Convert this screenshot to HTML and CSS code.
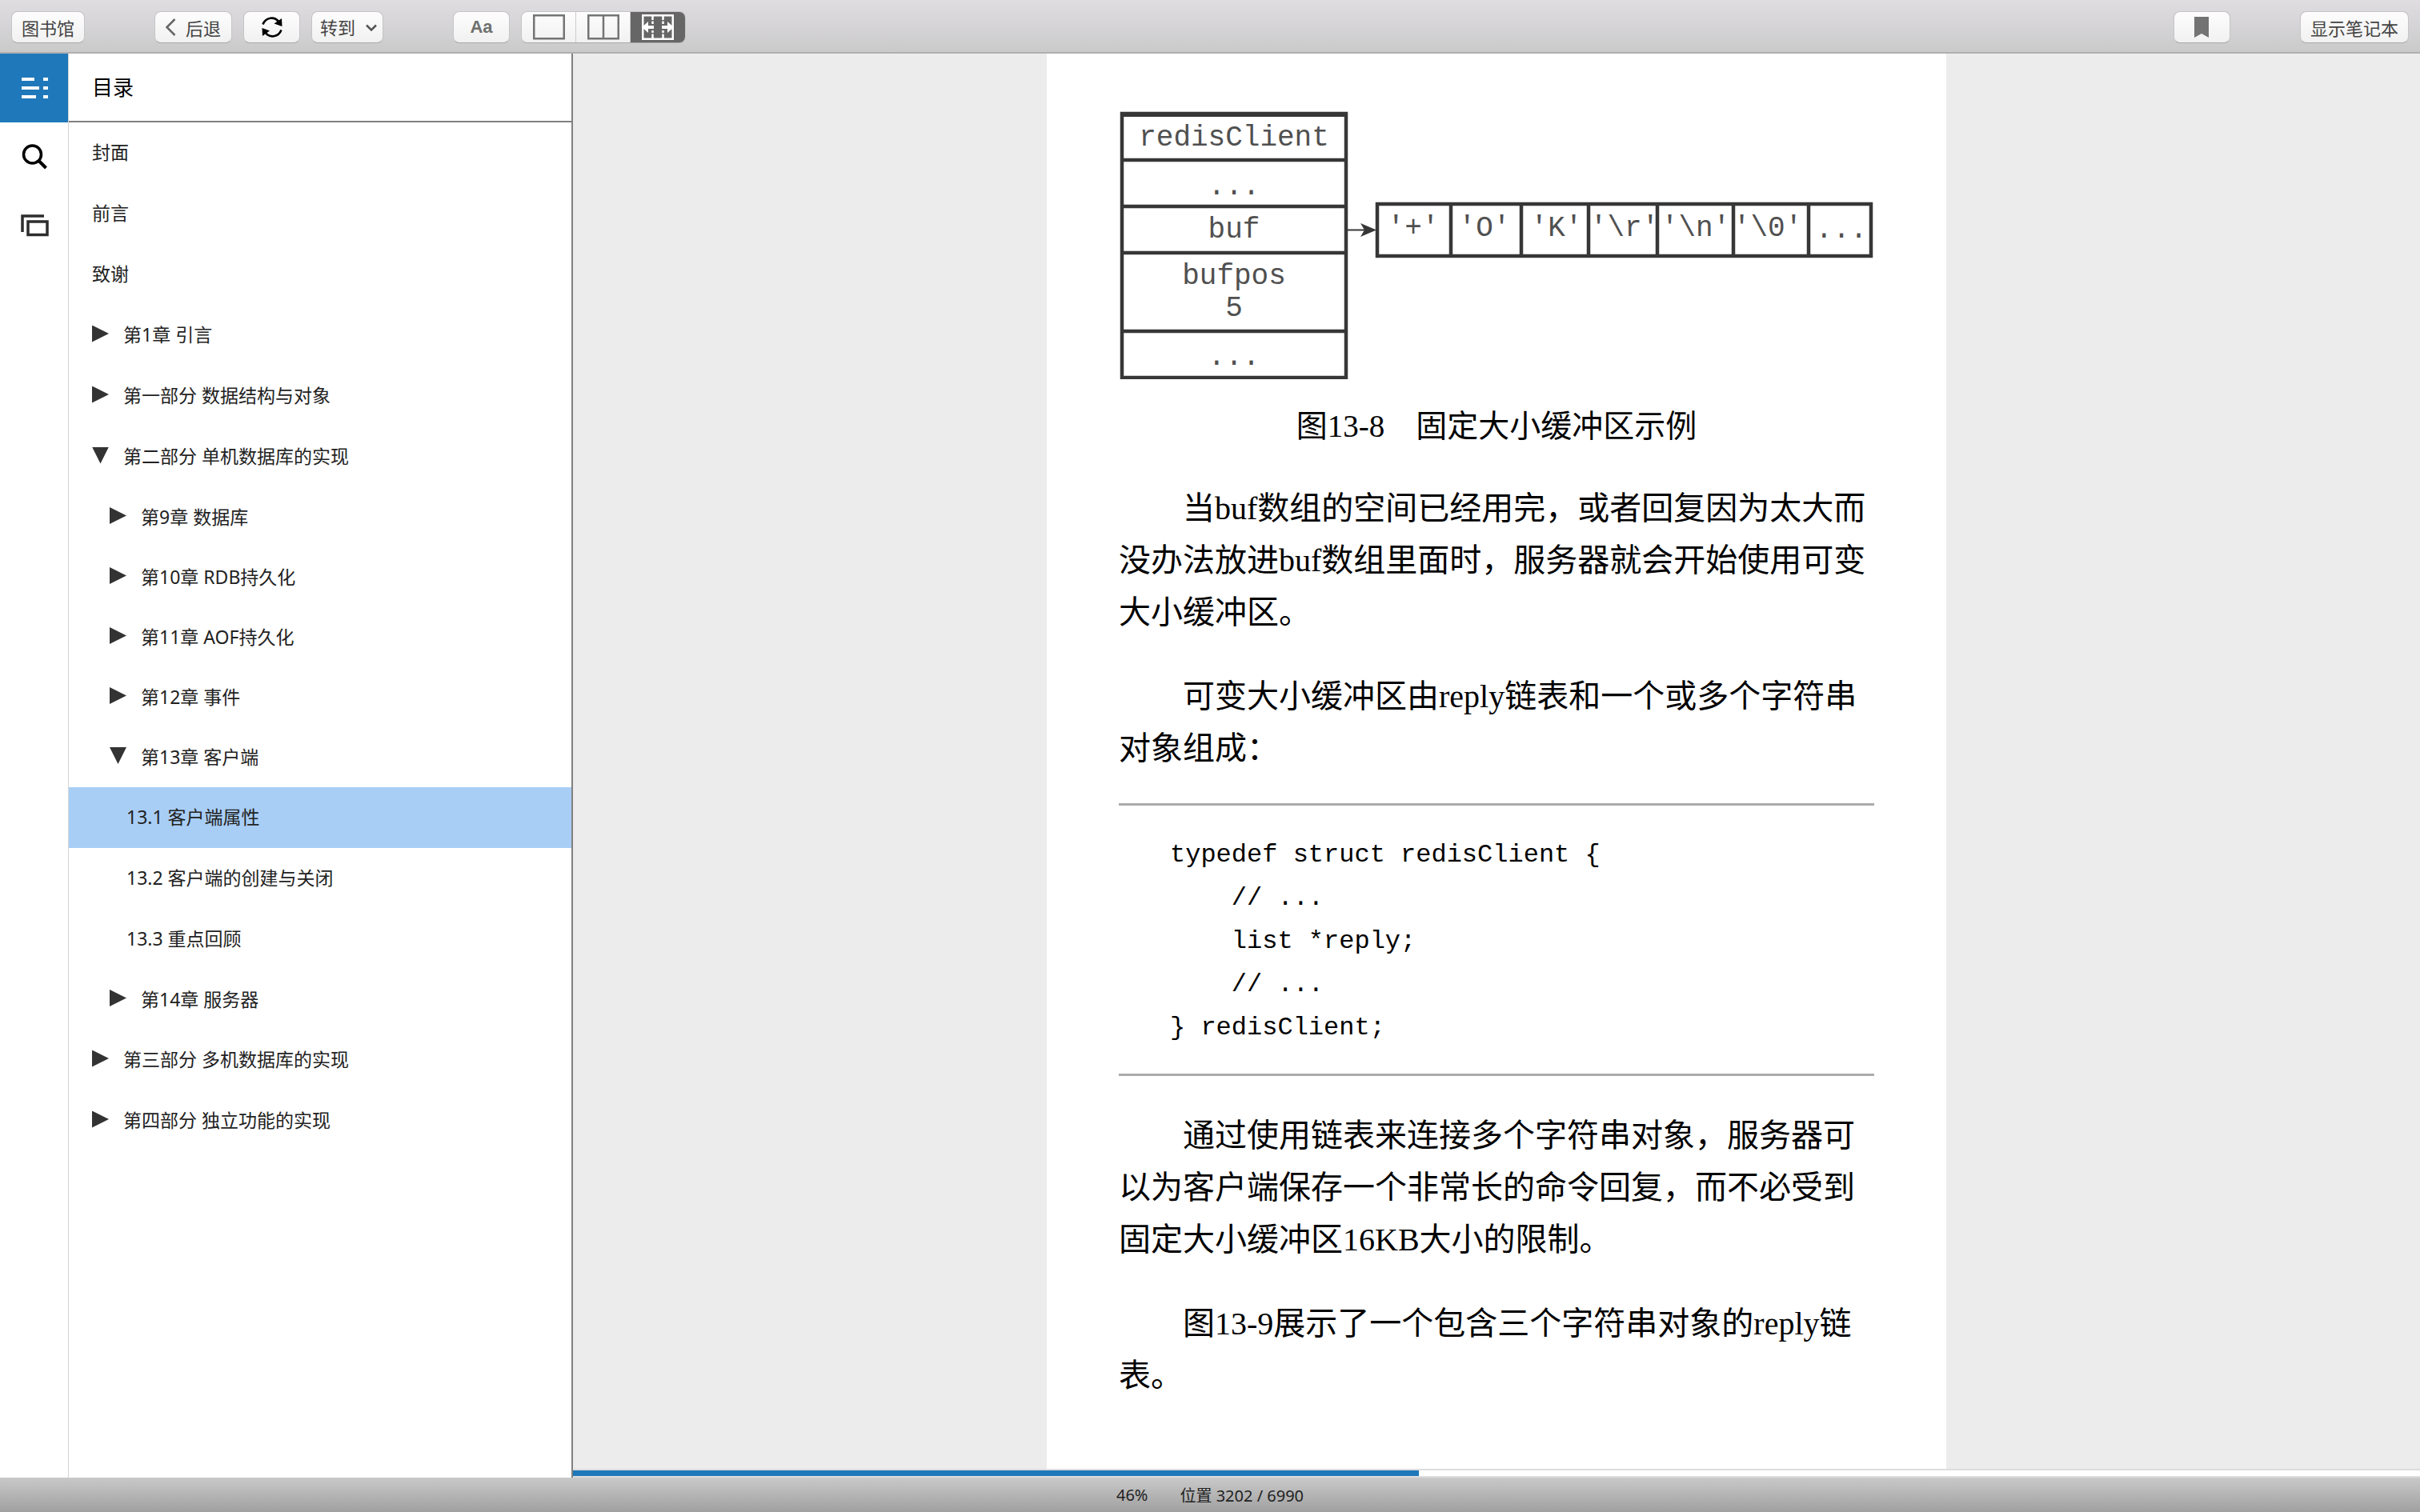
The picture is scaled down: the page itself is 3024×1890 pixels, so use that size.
FILE: index.html
```html
<!DOCTYPE html>
<html lang="zh-CN">
<head>
    <meta charset="UTF-8">
    <meta name="viewport" content="width=device-width, initial-scale=1.0">
    <title>第13章 客户端</title>
    <link rel="stylesheet" href="styles.css">
</head>
<body>
    <header class="toolbar">
        <div class="group">
            <button class="btn">图书馆</button>
        </div>
        <div class="group">
            <button class="btn btn-back">
                <svg width="13" height="22" viewBox="0 0 13 22"><path d="M11.5 1 L1.5 11 L11.5 21" fill="none" stroke="#666" stroke-width="2.5"/></svg>
                后退
            </button>
            <button class="btn btn-icon" aria-label="同步">
                <svg width="26" height="26" viewBox="0 0 26 26">
                    <path d="M1.5 9.5 C5 0.5 16 -1 21.5 6.5" fill="none" stroke="#000" stroke-width="2.6"/>
                    <path d="M25 2 L25.5 12 L15.5 8.5 Z"/>
                    <path d="M24.5 16.5 C21 25.5 10 27 4.5 19.5" fill="none" stroke="#000" stroke-width="2.6"/>
                    <path d="M0.5 14 L10 17.5 L1 24 Z"/>
                </svg>
            </button>
            <div class="goto">
                <select class="btn goto-select" aria-label="转到">
                    <option>转到</option>
                </select>
                <svg class="goto-arrow" width="14" height="9" viewBox="0 0 14 9"><path d="M1 1.5 L7 7.5 L13 1.5" fill="none" stroke="#555" stroke-width="2.5"/></svg>
            </div>
        </div>
        <div class="group">
            <button class="btn btn-icon btn-font">Aa</button>
            <div class="segments">
                <button class="segment" aria-label="单栏">
                    <svg width="40" height="32" viewBox="0 0 40 32"><rect x="1.25" y="1.25" width="37.5" height="29" fill="none" stroke="#737573" stroke-width="2.5"/></svg>
                </button>
                <button class="segment" aria-label="双栏">
                    <svg width="40" height="32" viewBox="0 0 40 32"><path d="M1.25 1.25 H38.75 V30.25 H1.25 Z M20 1 V30" fill="none" stroke="#737573" stroke-width="2.5"/></svg>
                </button>
                <button class="segment active" aria-label="适合宽度">
                    <svg width="40" height="32" viewBox="0 0 40 32">
                        <rect x="1.25" y="1.25" width="37.5" height="29.5" fill="none" stroke="#fff" stroke-width="2.5"/>
                        <path d="M13.5 2 V7 M13.5 8.5 V12 M13.5 20 V23 M13.5 24.5 V30 M26.5 2 V7 M26.5 8.5 V12 M26.5 20 V23 M26.5 24.5 V30" stroke="#fff" stroke-width="2.5"/>
                        <path d="M0 16 L8 9 V14 H15 V18 H8 V23 Z M40 16 L32 9 V14 H25 V18 H32 V23 Z" fill="#fff"/>
                    </svg>
                </button>
            </div>
        </div>
        <div class="group group-right">
            <button class="btn btn-icon" aria-label="书签">
                <svg width="18" height="26" viewBox="0 0 18 26"><path d="M0 0 H18 V26 L9 21 L0 26 Z" fill="#737373"/></svg>
            </button>
        </div>
        <div class="group">
            <button class="btn">显示笔记本</button>
        </div>
    </header>

    <div class="reader">
        <div class="rail">
            <button class="rail-btn active" aria-label="目录">
                <svg width="33" height="27" viewBox="0 0 33 27"><path d="M0 2 H16 M27 2 H33 M0 13 H22 M27 13 H33 M0 24 H18 M27 24 H33" stroke="#fff" stroke-width="4"/></svg>
            </button>
            <button class="rail-btn" aria-label="搜索">
                <svg width="33" height="32" viewBox="0 0 33 32"><circle cx="13.5" cy="13" r="11" fill="none" stroke="#000" stroke-width="3.5"/><path d="M21 20.5 L30.5 30" stroke="#000" stroke-width="4"/></svg>
            </button>
            <button class="rail-btn" aria-label="卡片">
                <svg width="35" height="28" viewBox="0 0 35 28"><path d="M29 2 H2 V22" fill="none" stroke="#2d2d2d" stroke-width="3.5"/><rect x="9" y="9" width="24" height="16.5" fill="none" stroke="#2d2d2d" stroke-width="3.5"/></svg>
            </button>
        </div>

        <nav class="toc">
            <h2 class="toc-title">目录</h2>
            <ul class="toc-list">
                <li><a href="#" class="item">封面</a></li>
                <li><a href="#" class="item">前言</a></li>
                <li><a href="#" class="item">致谢</a></li>
                <li><a href="#" class="item"><span class="arrow"></span>第1章 引言</a></li>
                <li><a href="#" class="item"><span class="arrow"></span>第一部分 数据结构与对象</a></li>
                <li><a href="#" class="item"><span class="arrow open"></span>第二部分 单机数据库的实现</a></li>
                <li><a href="#" class="item chapter"><span class="arrow"></span>第9章 数据库</a></li>
                <li><a href="#" class="item chapter"><span class="arrow"></span>第10章 RDB持久化</a></li>
                <li><a href="#" class="item chapter"><span class="arrow"></span>第11章 AOF持久化</a></li>
                <li><a href="#" class="item chapter"><span class="arrow"></span>第12章 事件</a></li>
                <li><a href="#" class="item chapter"><span class="arrow open"></span>第13章 客户端</a></li>
                <li><a href="#" class="item section current">13.1 客户端属性</a></li>
                <li><a href="#" class="item section">13.2 客户端的创建与关闭</a></li>
                <li><a href="#" class="item section">13.3 重点回顾</a></li>
                <li><a href="#" class="item chapter"><span class="arrow"></span>第14章 服务器</a></li>
                <li><a href="#" class="item"><span class="arrow"></span>第三部分 多机数据库的实现</a></li>
                <li><a href="#" class="item"><span class="arrow"></span>第四部分 独立功能的实现</a></li>
            </ul>
        </nav>

        <main class="content">
            <article class="page">
                <figure class="figure">
                    <svg class="diagram" viewBox="0 0 944 336">
                        <!-- redisClient struct -->
                        <g fill="none" stroke="#373737" stroke-width="4.5">
                            <rect x="4" y="4" width="280" height="330"/>
                            <path d="M4 62 H284 M4 120 H284 M4 178 H284 M4 276 H284"/>
                            <path d="M2 5 H286" stroke-width="6"/>
                        </g>
                        <g class="diagram-text">
                            <text x="144" y="44">redisClient</text>
                            <text x="144" y="105">...</text>
                            <text x="144" y="159">buf</text>
                            <text x="144" y="217">bufpos</text>
                            <text x="144" y="257">5</text>
                            <text x="144" y="318">...</text>
                        </g>
                        <!-- pointer -->
                        <path d="M286 149.5 H310" stroke="#373737" stroke-width="2"/>
                        <path d="M302 141 L322 149.5 L302 158 L307 149.5 Z" fill="#373737"/>
                        <!-- buf array -->
                        <g fill="none" stroke="#373737" stroke-width="4.5">
                            <rect x="323" y="117" width="617" height="65"/>
                            <path d="M415 117 V182 M503 117 V182 M587 117 V182 M673 117 V182 M768 117 V182 M862 117 V182"/>
                        </g>
                        <g class="diagram-text">
                            <text x="368" y="157">'+'</text>
                            <text x="457" y="157">'O'</text>
                            <text x="547" y="157">'K'</text>
                            <text x="632" y="157">'\r'</text>
                            <text x="721" y="157">'\n'</text>
                            <text x="811" y="157">'\0'</text>
                            <text x="903" y="159">...</text>
                        </g>
                    </svg>
                    <figcaption class="caption">图13-8　固定大小缓冲区示例</figcaption>
                </figure>

                <p>当buf数组的空间已经用完，或者回复因为太大而没办法放进buf数组里面时，服务器就会开始使用可变大小缓冲区。</p>
                <p>可变大小缓冲区由reply链表和一个或多个字符串对象组成：</p>

<pre class="code">typedef struct redisClient {
    // ...
    list *reply;
    // ...
} redisClient;</pre>

                <p>通过使用链表来连接多个字符串对象，服务器可以为客户端保存一个非常长的命令回复，而不必受到固定大小缓冲区16KB大小的限制。</p>
                <p>图13-9展示了一个包含三个字符串对象的reply链表。</p>
            </article>
            <div class="progress">
                <div class="progress-bar" style="width: 45.8%"></div>
            </div>
        </main>
    </div>

    <footer class="status">
        <span>46%</span>
        <span>位置 3202 / 6990</span>
    </footer>
</body>
</html>
```

FILE: styles.css
```css
* {
    box-sizing: border-box;
}

body {
    margin: 0;
    height: 100vh;
    display: flex;
    flex-direction: column;
    font-family: "Noto Sans", "Noto Sans CJK SC", sans-serif;
    color: #222;
    background: #fff;
}

button, select {
    font-family: inherit;
    margin: 0;
    cursor: pointer;
}

svg {
    display: block;
}

/* Toolbar */
.toolbar {
    display: flex;
    align-items: center;
    gap: 87px;
    height: 67px;
    padding: 2px 14px 0;
    flex: none;
    background: linear-gradient(#dfdde0, #cbcacb);
    border-bottom: 2px solid #b0afb0;
}

.group {
    display: flex;
    gap: 14px;
}

.group-right {
    margin-left: auto;
}

.btn {
    display: flex;
    align-items: center;
    justify-content: center;
    height: 40px;
    padding: 0 12px;
    font-size: 22px;
    color: #444;
    background: linear-gradient(#fdfdfd, #f1f1f1);
    border: 1px solid #c6c4c6;
    border-bottom-color: #a8a8a8;
    border-radius: 8px;
}

.btn-back {
    width: 97px;
    padding: 0;
    gap: 12px;
}

.btn-icon {
    width: 71px;
    padding: 0;
}

.btn-font {
    font-family: "Liberation Sans", Arial, sans-serif;
    font-weight: bold;
    color: #6e706e;
}

.goto {
    position: relative;
}

.goto-select {
    appearance: none;
    width: 90px;
    padding: 0 0 0 10px;
}

.goto-arrow {
    position: absolute;
    right: 8px;
    top: 16px;
    pointer-events: none;
}

.segments {
    display: flex;
    height: 40px;
    border: 1px solid #c6c4c6;
    border-bottom-color: #a8a8a8;
    border-radius: 8px;
    overflow: hidden;
}

.segment {
    display: flex;
    align-items: center;
    justify-content: center;
    width: 68px;
    padding: 0;
    border: 0;
    border-right: 1px solid #ccc;
    background: linear-gradient(#fdfdfd, #f1f1f1);
}

.segment.active {
    background: #666;
    border-right: 0;
}

/* Reader */
.reader {
    flex: 1;
    min-height: 0;
    display: flex;
}

.rail {
    width: 86px;
    flex: none;
    border-right: 1px solid #d4d4d4;
}

.rail-btn {
    display: flex;
    align-items: center;
    justify-content: center;
    width: 100%;
    height: 86px;
    padding: 0 0 0 2px;
    border: 0;
    background: #fff;
}

.rail-btn.active {
    background: #1f78ba;
}

/* Table of contents */
.toc {
    width: 630px;
    flex: none;
    border-right: 2px solid #808080;
}

.toc-title {
    margin: 0;
    padding-left: 29px;
    font-size: 26px;
    font-weight: normal;
    line-height: 84px;
    color: #000;
    border-bottom: 2px solid #808080;
}

.toc-list {
    list-style: none;
    margin: 0;
    padding: 0;
}

.item {
    display: flex;
    align-items: center;
    gap: 18px;
    height: 76px;
    padding: 0 0 4px 29px;
    font-size: 23px;
    color: #222;
    text-decoration: none;
}

.item.chapter {
    height: 75px;
    padding-left: 51px;
}

.item.section {
    padding-left: 72px;
}

.item.current {
    background: #a9cef6;
}

.arrow {
    width: 21px;
    height: 21px;
    background: #333;
    clip-path: polygon(0 0, 100% 50%, 0 100%);
}

.arrow.open {
    clip-path: polygon(0 0, 100% 0, 50% 100%);
}

/* Book page */
.content {
    flex: 1;
    min-width: 0;
    display: flex;
    flex-direction: column;
    background: #ececec;
}

.page {
    flex: 1;
    min-height: 0;
    overflow: hidden;
    width: 100%;
    max-width: 1124px;
    margin: 0 auto;
    padding: 71px 90px 0;
    background: #fff;
    color: #000;
    font-family: "Liberation Serif", "Noto Sans CJK SC", serif;
    font-size: 40px;
    line-height: 65px;
}

.figure {
    margin: 0 0 38px;
}

.diagram {
    width: 100%;
}

.diagram-text {
    font-family: "Liberation Mono", monospace;
    font-size: 36px;
    fill: #505050;
    text-anchor: middle;
}

.caption {
    margin-top: 26px;
    font-size: 39px;
    text-align: center;
}

.page p {
    margin: 0;
    text-indent: 2em;
}

.page p + p {
    margin-top: 40px;
}

.code {
    margin: 36px 0 42px;
    padding: 35px 64px 30px;
    border-top: 3px solid #aaa;
    border-bottom: 3px solid #aaa;
    font-family: "Liberation Mono", monospace;
    font-size: 32px;
    line-height: 54px;
}

.progress {
    height: 11px;
    flex: none;
    background: #fff;
    border-top: 2px solid #ddd;
    border-bottom: 2px solid #ddd;
}

.progress-bar {
    height: 100%;
    background: #1f78ba;
}

/* Status bar */
.status {
    display: flex;
    align-items: center;
    justify-content: center;
    gap: 40px;
    height: 43px;
    flex: none;
    font-size: 20px;
    background: linear-gradient(#c9c9c9, #a0a0a0);
}
```
